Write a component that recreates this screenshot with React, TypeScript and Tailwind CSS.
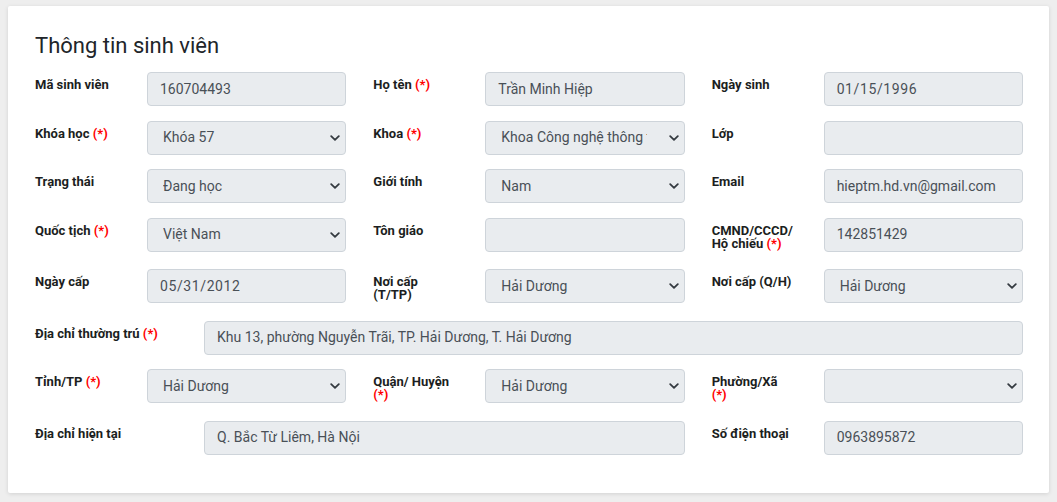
import type { ReactNode } from "react";

const Req = () => <span className="text-[#ff0000]">(*)</span>;

const Chevron = () => (
  <svg width="10" height="6" viewBox="0 0 10 6" className="shrink-0">
    <path d="M1.2 1.2L5 4.8L8.8 1.2" fill="none" stroke="#343a40" strokeWidth="1.8" strokeLinecap="round" strokeLinejoin="round" />
  </svg>
);

const TextBox = ({ value, date }: { value?: string; date?: boolean }) => (
  <div className="flex h-[34px] min-w-0 flex-1 items-center rounded-[4px] border border-[#ced4da] bg-[#e9ecef] px-3 text-[14px] text-[#495057]">
    <span className={date ? "tracking-[0.6px]" : ""}>{value}</span>
  </div>
);

const SelectBox = ({ value }: { value?: string }) => (
  <div className="flex h-[34px] min-w-0 flex-1 items-center rounded-[4px] border border-[#ced4da] bg-[#e9ecef] pl-[15px] pr-[5px] text-[14px] text-[#495057]">
    <span className="mr-[22px] min-w-0 flex-1 overflow-hidden whitespace-nowrap">{value}</span>
    <Chevron />
  </div>
);

const Field = ({
  label,
  children,
  wide,
  className = "",
}: {
  label: ReactNode;
  children: ReactNode;
  wide?: boolean;
  className?: string;
}) => (
  <div className={`flex min-w-0 items-start ${className}`}>
    <div
      className={`${wide ? "w-[169px]" : "w-[112px]"} shrink-0 whitespace-nowrap pb-[5px] pt-[6px] text-[13px] font-bold leading-[13px] text-[#1b1e21]`}
    >
      {label}
    </div>
    {children}
  </div>
);

export default function App() {
  return (
    <div className="h-[502px] bg-[#eeeeee] pl-[8px] pt-[6px]" style={{ fontFamily: "Roboto, 'Noto Sans', sans-serif" }}>
      <div className="h-[487px] w-[1041px] rounded-[2px] bg-white pl-[27px] pr-[26px] pt-[27px] shadow-[0_1px_4px_rgba(0,0,0,0.12)]">
        {/* Title */}
        <h4 className="mb-[13px] text-[22px] font-normal leading-[26px] text-[#212529]">Thông tin sinh viên</h4>

        {/* Form grid */}
        <div className="grid grid-cols-3 items-start gap-x-[27px] gap-y-[14.5px]">
          <Field label="Mã sinh viên">
            <TextBox value="160704493" />
          </Field>
          <Field label={<>Họ tên <Req /></>}>
            <TextBox value="Trần Minh Hiệp" />
          </Field>
          <Field label="Ngày sinh">
            <TextBox value="01/15/1996" date />
          </Field>

          <Field label={<>Khóa học <Req /></>}>
            <SelectBox value="Khóa 57" />
          </Field>
          <Field label={<>Khoa <Req /></>}>
            <SelectBox value="Khoa Công nghệ thông tin" />
          </Field>
          <Field label="Lớp">
            <TextBox />
          </Field>

          <Field label="Trạng thái">
            <SelectBox value="Đang học" />
          </Field>
          <Field label="Giới tính">
            <SelectBox value="Nam" />
          </Field>
          <Field label="Email">
            <TextBox value="hieptm.hd.vn@gmail.com" />
          </Field>

          <Field label={<>Quốc tịch <Req /></>}>
            <SelectBox value="Việt Nam" />
          </Field>
          <Field label="Tôn giáo">
            <TextBox />
          </Field>
          <Field label={<>CMND/CCCD/<br />Hộ chiếu <Req /></>}>
            <TextBox value="142851429" />
          </Field>

          <Field label="Ngày cấp">
            <TextBox value="05/31/2012" date />
          </Field>
          <Field label={<>Nơi cấp<br />(T/TP)</>}>
            <SelectBox value="Hải Dương" />
          </Field>
          <Field label="Nơi cấp (Q/H)">
            <SelectBox value="Hải Dương" />
          </Field>

          <Field wide className="col-span-3" label={<>Địa chỉ thường trú <Req /></>}>
            <TextBox value="Khu 13, phường Nguyễn Trãi, TP. Hải Dương, T. Hải Dương" />
          </Field>

          <Field label={<>Tỉnh/TP <Req /></>}>
            <SelectBox value="Hải Dương" />
          </Field>
          <Field label={<>Quận/ Huyện<br /><Req /></>}>
            <SelectBox value="Hải Dương" />
          </Field>
          <Field label={<>Phường/Xã<br /><Req /></>}>
            <SelectBox />
          </Field>

          <Field wide className="col-span-2" label="Địa chỉ hiện tại">
            <TextBox value="Q. Bắc Từ Liêm, Hà Nội" />
          </Field>
          <Field label="Số điện thoại">
            <TextBox value="0963895872" />
          </Field>
        </div>
      </div>
    </div>
  );
}
